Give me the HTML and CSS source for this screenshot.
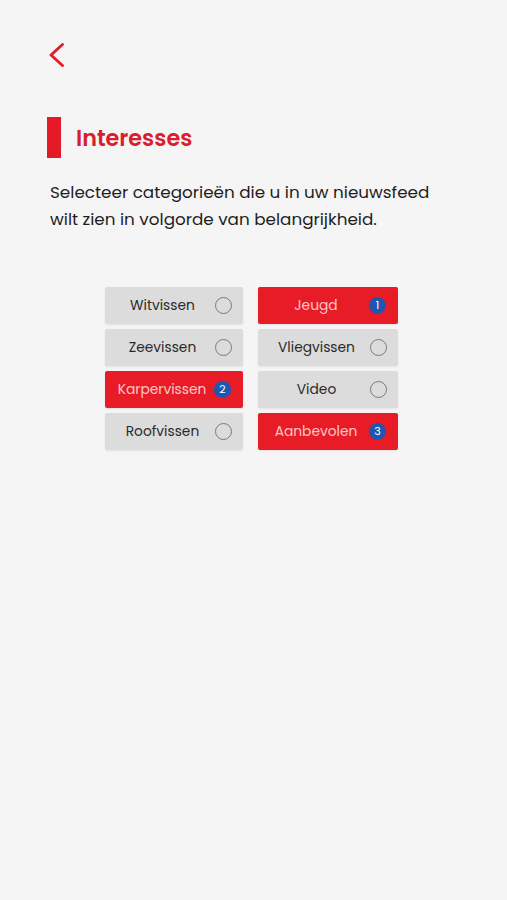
FILE: index.html
```html
<!DOCTYPE html>
<html lang="nl">
<head>
<meta charset="utf-8">
<link rel="stylesheet" href="styles.css">
</head>
<body>
<div class="screen">
  <div class="topbar">
    <svg class="back" width="20" height="26" viewBox="0 0 20 26"><path d="M15.5 2.5 L4 13 L15.5 23.5" fill="none" stroke="#e01f2b" stroke-width="3" stroke-linecap="round" stroke-linejoin="round"/></svg>
  </div>
  <div class="heading">
    <div class="bar"></div>
    <h1 class="title">Interesses</h1>
  </div>
  <p class="intro">Selecteer categorieën die u in uw nieuwsfeed wilt zien in volgorde van belangrijkheid.</p>
  <div class="grid">
    <div class="col left">
      <div class="chip"><span class="label">Witvissen</span><span class="radio"></span></div>
      <div class="chip"><span class="label">Zeevissen</span><span class="radio"></span></div>
      <div class="chip on"><span class="label">Karpervissen</span><span class="badge">2</span></div>
      <div class="chip"><span class="label">Roofvissen</span><span class="radio"></span></div>
    </div>
    <div class="col right">
      <div class="chip on"><span class="label">Jeugd</span><span class="badge">1</span></div>
      <div class="chip"><span class="label">Vliegvissen</span><span class="radio"></span></div>
      <div class="chip"><span class="label">Video</span><span class="radio"></span></div>
      <div class="chip on"><span class="label">Aanbevolen</span><span class="badge">3</span></div>
    </div>
  </div>
</div>
</body>
</html>
```
FILE: styles.css
```css
html, body {
  margin: 0;
  padding: 0;
  background: #f5f5f5;
}
body {
  font-family: "Poppins", "Inter", "Noto Sans", sans-serif;
  color: #222;
}
.screen {
  width: 507px;
  height: 900px;
  box-sizing: border-box;
  padding: 42px 0 0 47px;
}
.topbar {
  height: 30px;
}
.back {
  display: block;
}
.heading {
  display: flex;
  align-items: center;
  margin-top: 45px;
  height: 41px;
}
.bar {
  width: 14px;
  height: 41px;
  background: #e41b27;
}
.title {
  margin: 0 0 0 15px;
  padding-top: 2px;
  font-size: 22.3px;
  font-weight: 600;
  color: #d8202c;
  letter-spacing: 0;
}
.intro {
  margin: 21px 0 0 3px;
  width: 400px;
  font-size: 16.8px;
  line-height: 27px;
  color: #1e1e1e;
}
.grid {
  display: flex;
  gap: 15px;
  margin: 54px 0 0 58px;
}
.col {
  display: flex;
  flex-direction: column;
  gap: 5px;
}
.left { width: 138px; }
.right { width: 140px; }
.chip {
  display: flex;
  align-items: center;
  height: 37px;
  box-sizing: border-box;
  padding: 0 11px 0 9px;
  background: #dcdcdc;
  border-radius: 2px;
  box-shadow: 0 1px 2px rgba(0,0,0,0.08);
}
.chip.on {
  background: #e81c26;
}
.label {
  flex: 1;
  text-align: center;
  font-size: 13.8px;
  color: #2a2a2a;
  white-space: nowrap;
}
.chip.on .label {
  color: #ffc4c6;
}
.radio {
  width: 15px;
  height: 15px;
  border: 1.6px solid #7a7a7a;
  border-radius: 50%;
  flex: none;
  margin-left: 4px;
}
.badge {
  width: 17px;
  height: 17px;
  border-radius: 50%;
  background: #1d56b3;
  color: #fff;
  font-size: 11px;
  line-height: 17px;
  text-align: center;
  flex: none;
  margin-left: 4px;
  margin-right: 1px;
}
```
